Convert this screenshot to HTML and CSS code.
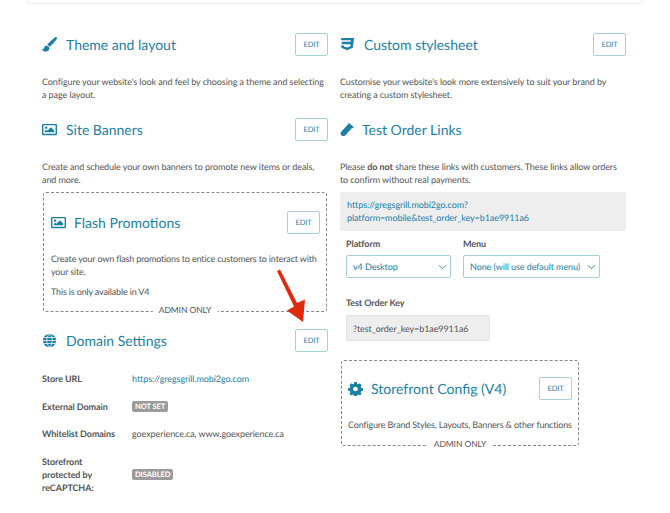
FILE: index.html
```html
<!DOCTYPE html>
<html lang="en">
<head>
  <meta charset="UTF-8" />
  <title>Website settings</title>
  <link rel="stylesheet" href="styles.css">
</head>
<body>
  <div class="top-card"></div>

  <main class="columns">
    <div class="col">
      <section class="block block-theme">
        <div class="block-head">
          <svg class="icon" viewBox="0 0 16 16"><path d="M15.600.3c-.5-.5-1.300-.4-2 .1C10.800 2.600 7.800 5.300 5.700 8.100l2.400 2.200C10.800 8.100 14 5 15.600 2.500c.4-.8.500-1.600 0-2.200zM5 9C3 9.200 2.500 10.600 2.200 11.800c-.2 1-1 1.500-2.200 1.500C1 15 3 15.800 5 15.400c2.300-.5 3.500-2.500 2.600-4.500z"/></svg>
          <h2>Theme and layout</h2>
          <a class="edit-btn">EDIT</a>
        </div>
        <p>Configure your website's look and feel by choosing a theme and selecting a page layout.</p>
      </section>

      <section class="block block-banners">
        <div class="block-head">
          <svg class="icon" viewBox="0 0 16 16"><path fill-rule="evenodd" d="M1.300 2h13.400C15.400 2 16 2.600 16 3.300v9.400c0 .7-.6 1.300-1.300 1.300H1.300C.6 14 0 13.400 0 12.700V3.300C0 2.600.6 2 1.300 2zm.2 1.500v9h13v-9zM4.500 4.700a1.300 1.300 0 1 1 0 2.600 1.300 1.300 0 0 1 0-2.600zM3 11V9.500l1.500-1.300 1.200 1 3.800-3.500L13 9v2z"/></svg>
          <h2>Site Banners</h2>
          <a class="edit-btn">EDIT</a>
        </div>
        <p>Create and schedule your own banners to promote new items or deals, and more.</p>
      </section>

      <section class="admin-box flash-box">
        <div class="block-head">
          <svg class="icon" viewBox="0 0 16 16"><path fill-rule="evenodd" d="M1.300 2h13.400C15.400 2 16 2.600 16 3.300v9.400c0 .7-.6 1.300-1.300 1.300H1.300C.6 14 0 13.400 0 12.700V3.300C0 2.600.6 2 1.300 2zm.2 1.500v9h13v-9zM4.500 4.700a1.300 1.300 0 1 1 0 2.600 1.300 1.300 0 0 1 0-2.600zM3 11V9.500l1.500-1.300 1.200 1 3.800-3.500L13 9v2z"/></svg>
          <h2>Flash Promotions</h2>
          <a class="edit-btn">EDIT</a>
        </div>
        <p>Create your own flash promotions to entice customers to interact with your site.</p>
        <p class="note">This is only available in V4</p>
        <span class="admin-label">ADMIN ONLY</span>
      </section>

      <section class="block block-domain">
        <div class="block-head">
          <svg class="icon" viewBox="0 0 16 16"><path d="M8 1a7 7 0 1 0 0 14A7 7 0 0 0 8 1z"/><path d="M1 8h14M1.800 4.800h12.400M1.800 11.200h12.400M8 1c-4 3.500-4 10.500 0 14M8 1c4 3.500 4 10.500 0 14" fill="none" stroke="#fff" stroke-width=".8"/></svg>
          <h2>Domain Settings</h2>
          <a class="edit-btn">EDIT</a>
        </div>
        <div class="info-table">
          <div class="info-label">Store URL</div>
          <div><a class="link">https://gregsgrill.mobi2go.com</a></div>
          <div class="info-label">External Domain</div>
          <div><span class="badge">NOT SET</span></div>
          <div class="info-label">Whitelist Domains</div>
          <div>goexperience.ca, www.goexperience.ca</div>
          <div class="info-label info-label-wrap">Storefront protected by reCAPTCHA:</div>
          <div><span class="badge">DISABLED</span></div>
        </div>
      </section>
    </div>

    <div class="col">
      <section class="block block-theme">
        <div class="block-head">
          <svg class="icon" viewBox="0 0 16 16"><path d="M1.500 1h13.500l-1.400 10.500L7.500 14l-6-2.500L1 9h3l.2 1 3.300 1.300 3.500-1.300.3-2.200H1.600l.5-2.800h9.300l.3-1.500H1z"/></svg>
          <h2>Custom stylesheet</h2>
          <a class="edit-btn">EDIT</a>
        </div>
        <p>Customise your website's look more extensively to suit your brand by creating a custom stylesheet.</p>
      </section>

      <section class="block block-links">
        <div class="block-head">
          <svg class="icon icon-tube" viewBox="0 0 16 16"><path d="M9.800 1.200l5 4.400-1.200 1.100-.6-.5-7.300 7.800c-1.200 1.300-3 1.400-4.200.3-1.200-1.100-1.200-2.900 0-4.200l7.200-7.800-.6-.5z"/></svg>
          <h2>Test Order Links</h2>
        </div>
        <p>Please <strong>do not</strong> share these links with customers. These links allow orders to confirm without real payments.</p>
      </section>

      <div class="link-box">
        <a class="link">https://gregsgrill.mobi2go.com?<br>platform=mobile&amp;test_order_key=b1ae9911a6</a>
      </div>

      <div class="select-row">
        <div>
          <label>Platform</label>
          <div class="select select-platform">
            <span>v4 Desktop</span>
            <svg class="chevron" viewBox="0 0 10 6"><path d="M1 1l4 4 4-4"/></svg>
          </div>
        </div>
        <div>
          <label>Menu</label>
          <div class="select select-menu">
            <span>None (will use default menu)</span>
            <svg class="chevron" viewBox="0 0 10 6"><path d="M1 1l4 4 4-4"/></svg>
          </div>
        </div>
      </div>

      <div class="key-field">
        <label>Test Order Key</label>
        <div class="key-input">?test_order_key=b1ae9911a6</div>
      </div>

      <section class="admin-box config-box">
        <div class="block-head">
          <svg class="icon" viewBox="0 0 16 16"><path fill-rule="evenodd" d="M6.700 1h2.600l.4 1.900 1.300.6 1.700-1 1.800 1.900-1 1.600.5 1.300 2 .4v2.600l-2 .4-.5 1.300 1 1.600-1.800 1.900-1.700-1-1.300.6-.4 1.900H6.700l-.4-1.900-1.300-.6-1.700 1-1.800-1.900 1-1.600-.5-1.300-2-.4V7.700l2-.4.5-1.300-1-1.600 1.800-1.900 1.700 1 1.300-.6zM8 6a2.500 2.500 0 1 0 0 5 2.500 2.500 0 0 0 0-5z"/></svg>
          <h2>Storefront Config (V4)</h2>
          <a class="edit-btn">EDIT</a>
        </div>
        <p>Configure Brand Styles, Layouts, Banners &amp; other functions</p>
        <span class="admin-label">ADMIN ONLY</span>
      </section>
    </div>
  </main>

  <!-- annotation drawn on top of the screenshot -->
  <svg class="arrow" viewBox="0 0 670 513"><path d="M277 271l3-1.500 17 33.500 8-3.500-2 22.500-16-11.500 7-4z"/></svg>
</body>
</html>
```

FILE: styles.css
```css
body {
  font-family: Lato, "Open Sans", sans-serif;
  font-size: 9px;
  letter-spacing: -0.08px;
  line-height: 13px;
  margin: 0;
  background: #fff;
  color: #555;
  text-rendering: geometricPrecision;
}
strong {
  margin: 0 0.2px;
}
.top-card {
  height: 3px;
  margin: 0 27px 0 27px;
  background: #fff;
  border: 1px solid #eee;
  border-top: none;
  border-radius: 0 0 3px 3px;
}
.columns {
  display: flex;
  gap: 12px;
  padding: 29px 0 0 42px;
}
.col {
  width: 286px;
}
.block-head {
  display: flex;
  align-items: center;
  height: 23px;
}
.icon {
  width: 15px;
  height: 15px;
  flex: none;
  fill: #1b7fa6;
  margin-right: 9px;
}
.icon-tube {
  margin-right: 7px;
}
.flash-box .icon,
.config-box .icon {
  margin-right: 8px;
}
h2 {
  flex: 1;
  margin: 0;
  font-size: 14px;
  letter-spacing: 0;
  font-weight: 400;
  color: #1b7fa6;
}
.edit-btn {
  flex: none;
  box-sizing: border-box;
  width: 33px;
  height: 23px;
  line-height: 21px;
  text-align: center;
  font-size: 7.5px;
  color: #1b7fa6;
  border: 1px solid #a9cfdf;
  border-radius: 2px;
}
p {
  margin: 0;
}
.block-head + p {
  margin-top: 19px;
}
.block-theme {
  height: 85px;
}
.block-banners {
  height: 74px;
}
.block-links {
  height: 74px;
}
.admin-box {
  position: relative;
  box-sizing: border-box;
  border: 1.5px dashed #888;
  border-radius: 3px;
}
.admin-box p {
  letter-spacing: -0.16px;
}
.admin-box .block-head + p {
  margin-top: 18px;
}
.flash-box {
  height: 120px;
  margin-left: 1px;
  width: 284px;
  padding: 18px 6px 0 7px;
}
.flash-box .note {
  margin-top: 7px;
}
.admin-label {
  position: absolute;
  left: 50%;
  bottom: -6px;
  transform: translateX(-50%);
  padding: 0 6px;
  background: #fff;
  font-size: 8.5px;
  white-space: nowrap;
}
.block-domain {
  margin-top: 17px;
}
.info-table {
  display: grid;
  grid-template-columns: 90px 1fr;
  row-gap: 14.7px;
  margin-top: 20px;
  align-items: center;
}
.info-label {
  font-weight: 700;
}
.info-label-wrap {
  width: 60px;
}
.link {
  color: #1b7fa6;
}
.badge {
  display: block;
  width: fit-content;
  height: 11px;
  line-height: 11px;
  padding: 0 3px;
  font-size: 7.5px;
  font-weight: 700;
  color: #fff;
  background: #9b9b9b;
  border-radius: 2px;
}
.link-box {
  box-sizing: border-box;
  height: 39px;
  padding: 6px 7px;
  background: #eee;
  border-radius: 2px;
}
label {
  display: block;
  font-weight: 700;
  margin-bottom: 5px;
}
.select-row {
  display: flex;
  gap: 12px;
  margin: 6px 0 0 6px;
}
.select {
  box-sizing: border-box;
  display: flex;
  justify-content: space-between;
  align-items: center;
  height: 23px;
  padding: 0 3px 0 6px;
  color: #1b7fa6;
  white-space: nowrap;
  border: 1px solid #a9cfdf;
  border-radius: 2px;
}
.select-platform {
  width: 105px;
}
.select-menu {
  width: 137px;
}
.chevron {
  width: 9px;
  height: 6px;
  fill: none;
  stroke: #1b7fa6;
  stroke-width: 1;
}
.key-field {
  margin: 18px 0 0 6px;
}
.key-field label {
  margin-bottom: 6px;
}
.key-input {
  box-sizing: border-box;
  width: 144px;
  height: 26px;
  line-height: 25px;
  padding-left: 6px;
  background: #eee;
  border: 1px solid #e4e4e4;
  border-radius: 2px;
}
.config-box {
  width: 238px;
  height: 86px;
  margin: 19px 0 0 1px;
  padding: 16px 6px 0 6px;
}
.config-box p {
  white-space: nowrap;
}
.arrow {
  position: absolute;
  left: 0;
  top: 0;
  width: 670px;
  height: 513px;
  fill: #e0290c;
}
```
